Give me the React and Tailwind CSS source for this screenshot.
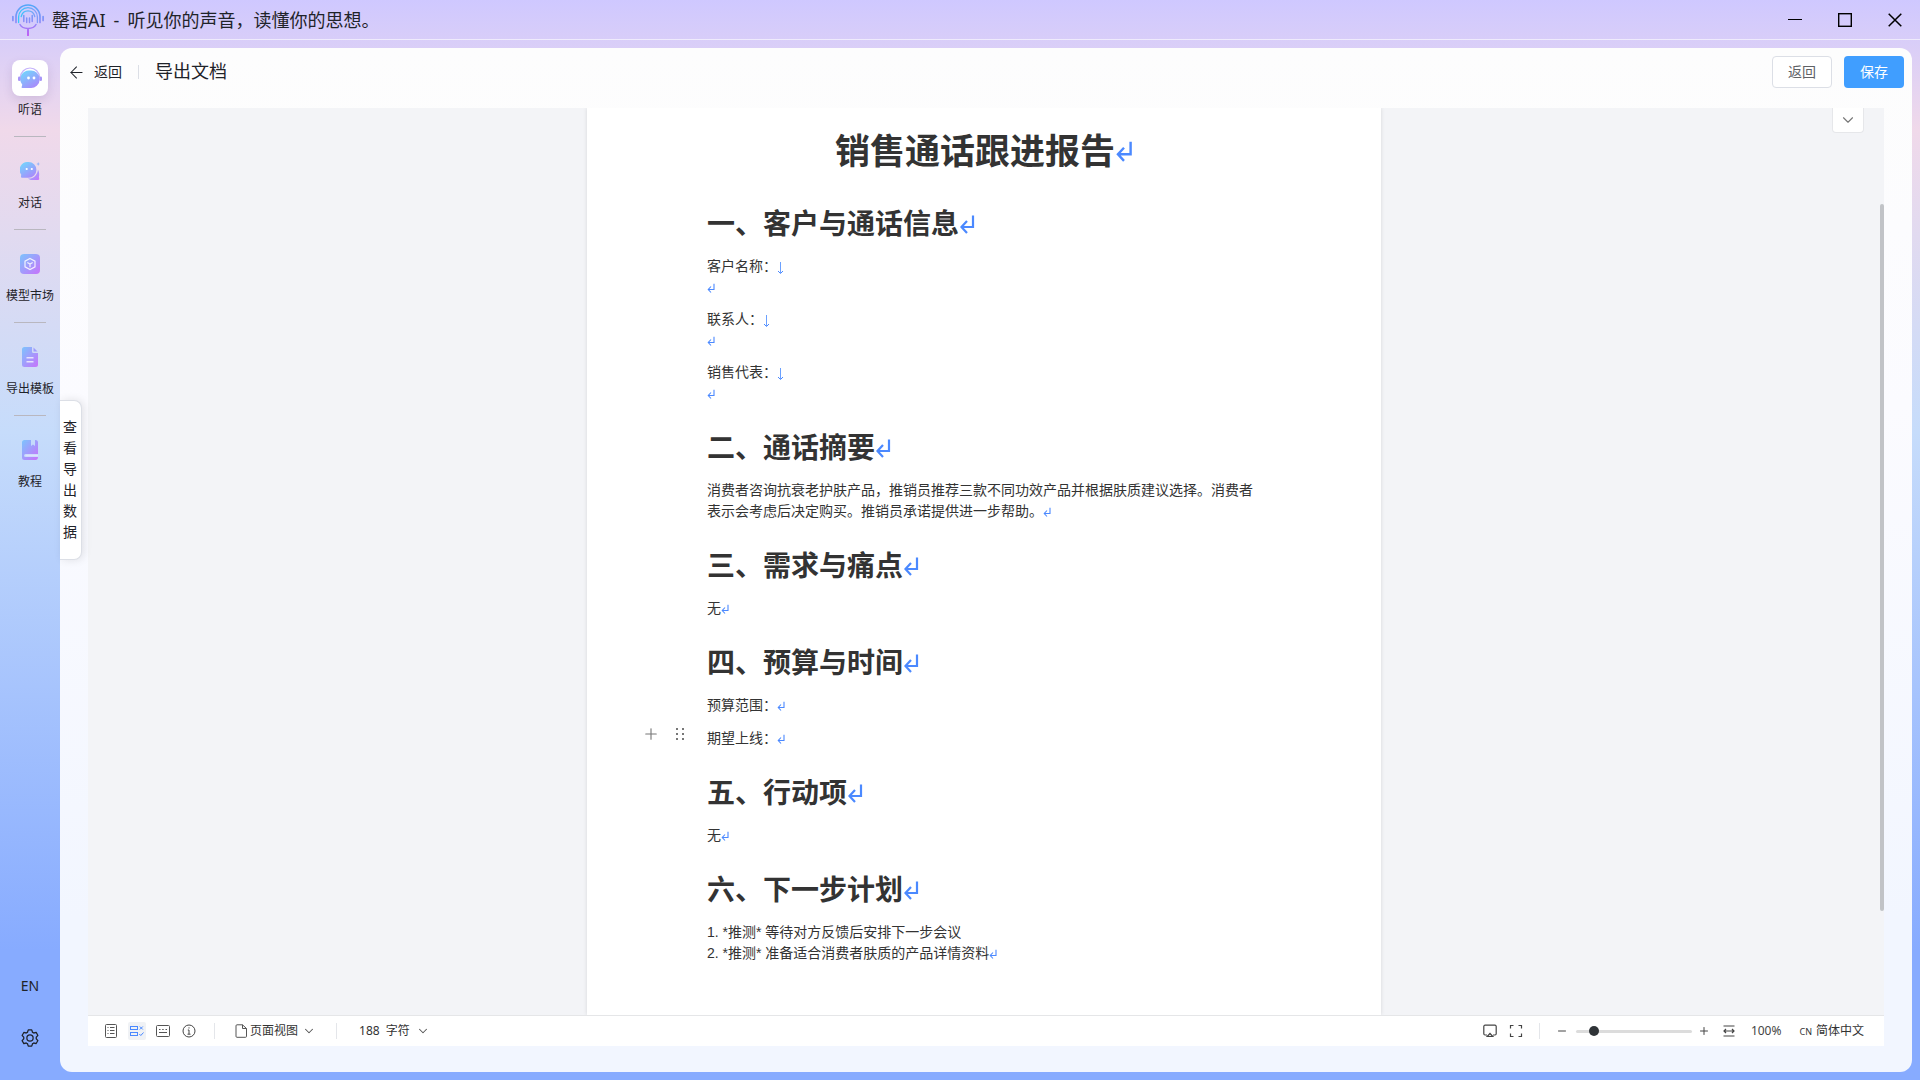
import { Minus, Plus, ChevronDown, ArrowLeft } from "lucide-react";

const NAV = [
  { id: "listen", label: "听语", icon: ListenIcon, active: true },
  { id: "chat", label: "对话", icon: ChatIcon },
  { id: "market", label: "模型市场", icon: MarketIcon },
  { id: "template", label: "导出模板", icon: TemplateIcon },
  { id: "guide", label: "教程", icon: GuideIcon },
];

// shared gradients, referenced by id from the icons
function Gradients() {
  return (
    <svg width="0" height="0" className="absolute" aria-hidden="true">
      <defs>
        <linearGradient id="g-diag" x1="0" y1="0" x2="1" y2="1">
          <stop offset="0" stopColor="#7cc4fd" />
          <stop offset="1" stopColor="#c873fb" />
        </linearGradient>
        <linearGradient id="g-bubble" x1="0.2" y1="0" x2="0.9" y2="1">
          <stop offset="0" stopColor="#72d6fd" />
          <stop offset="1" stopColor="#ae82fb" />
        </linearGradient>
        <linearGradient id="g-logo" x1="0" y1="0" x2="0" y2="32" gradientUnits="userSpaceOnUse">
          <stop offset="0" stopColor="#4fa8f8" />
          <stop offset="0.55" stopColor="#8a8ef8" />
          <stop offset="1" stopColor="#c35cf5" />
        </linearGradient>
        <linearGradient id="g-logo-inner" x1="8" y1="0" x2="24" y2="0" gradientUnits="userSpaceOnUse">
          <stop offset="0" stopColor="#35c8fa" />
          <stop offset="1" stopColor="#7f9cf8" />
        </linearGradient>
      </defs>
    </svg>
  );
}

function Logo() {
  return (
    <svg width="32" height="32" viewBox="0 0 32 32" fill="none" stroke="url(#g-logo)" strokeLinecap="round">
      <path d="M4 18.500V13a12 12 0 0 1 24 0v5.500" strokeWidth="1.700" />
      <path d="M6.600 18.500V13a9.400 9.400 0 0 1 18.800 0v5.500" strokeWidth="1.300" stroke="url(#g-logo-inner)" />
      <path d="M9.200 12.500a7 7.500 0 0 1 13.600 0" strokeWidth="1.300" stroke="url(#g-logo-inner)" />
      <path d="M.9 12.500v4M31.100 12.500v4" strokeWidth="1.700" />
      <path d="M8 20.500a8.500 6 0 0 0 16 0" strokeWidth="1.500" />
      <path d="M11.800 11.500v6M14.700 14v4.500M17.500 14v4.500M20.200 11.500v6" strokeWidth="1.500" />
      <path d="M16 25.500v5.700" strokeWidth="2" />
    </svg>
  );
}

function ListenIcon() {
  return (
    <svg width="26" height="26" viewBox="0 0 26 26" fill="none">
      <path d="M3.500 12.500a9.500 9.500 0 0 1 19 0" stroke="#c5b3fb" strokeWidth="1.200" />
      <path d="M13 5.500a8.800 8.800 0 1 1 0 17.500H5.400c-.8 0-1.100-.6-.7-1.200l.6-2A8.800 8.800 0 0 1 13 5.500z" fill="url(#g-bubble)" />
      <rect x="1" y="11.500" width="2.600" height="4.500" rx="1.300" fill="#a795f8" />
      <rect x="22.400" y="11.500" width="2.600" height="4.500" rx="1.300" fill="#a795f8" />
      <circle cx="11.500" cy="13" r="1.400" fill="#fff" />
      <circle cx="17" cy="13" r="1.400" fill="#fff" />
    </svg>
  );
}

function ChatIcon() {
  return (
    <svg width="20" height="20" viewBox="0 0 20 20" fill="none">
      <path d="M18 8.500c1.500 3 1.400 5.500.9 7.500l.3 1.800c.1.700-.2 1.200-1 1.200H12c-1.800 0-3-.6-4-1.500 5 .5 9.500-3 10-9z" fill="url(#g-diag)" />
      <path d="M8.500 1a7.900 7.900 0 1 1 0 15.800H2c-.8 0-1.100-.5-1-1.200l.2-2A7.900 7.900 0 0 1 8.500 1z" fill="url(#g-bubble)" />
      <path d="M18.200 1l.5 1.500 1.300.5-1.300.5-.5 1.500-.5-1.500-1.300-.5 1.300-.5z" fill="#8eb0fb" />
      <circle cx="6.700" cy="8" r="1.100" fill="#fff" />
      <circle cx="11.800" cy="8" r="1.100" fill="#fff" />
    </svg>
  );
}

function MarketIcon() {
  return (
    <svg width="20" height="20" viewBox="0 0 20 20" fill="none">
      <rect width="20" height="20" rx="4" fill="url(#g-diag)" />
      <path d="M10 4.500l5 2.700v5.600l-5 2.700-5-2.700V7.200z" stroke="#fff" strokeOpacity=".85" strokeWidth="1.200" />
      <path d="M7.300 8.500L10 10l2.700-1.500M10 10v3.300" stroke="#fff" strokeOpacity=".85" strokeWidth="1.200" />
    </svg>
  );
}

function TemplateIcon() {
  return (
    <svg width="16" height="20" viewBox="0 0 16 20" fill="none">
      <path d="M2.500 0H10v4.500A1.500 1.500 0 0 0 11.500 6H16v11.500a2.500 2.500 0 0 1-2.500 2.500h-11A2.500 2.500 0 0 1 0 17.500v-15A2.500 2.500 0 0 1 2.500 0z" fill="url(#g-diag)" />
      <path d="M11.500.5l4 4h-4z" fill="#9f9bfc" />
      <path d="M4.500 10.700h7M4.500 14.700h7" stroke="#e6e2fd" strokeWidth="1.400" />
    </svg>
  );
}

function GuideIcon() {
  return (
    <svg width="16" height="20" viewBox="0 0 16 20" fill="none">
      <path d="M2.500 0H9v6l2-1.500L13 6V0h.5A2.500 2.500 0 0 1 16 2.500V14H3.500a1.500 1.500 0 0 0 0 3H16c0 1.800-1 3-2.500 3h-11A2.500 2.500 0 0 1 0 17.500v-15A2.500 2.500 0 0 1 2.500 0z" fill="url(#g-diag)" />
      <path d="M3.500 15.500H16" stroke="#dfe0fd" strokeWidth="1.600" />
    </svg>
  );
}

function GearIcon() {
  return (
    <svg width="20" height="20" viewBox="0 0 1024 1024" fill="currentColor">
      <path d="M600.700 64a32 32 0 0 1 30.500 22.200l35.200 109.400c14.700 7.200 28.700 15.400 42.400 24.400l112.400-24.200a32 32 0 0 1 34.400 15.300L944.300 364.800a32 32 0 0 1-4 37.500l-77.100 85.100a357.100 357.100 0 0 1 0 49l77.100 85.200a32 32 0 0 1 4 37.500l-88.700 153.600a32 32 0 0 1-34.400 15.300L708.800 803.900c-13.600 9-27.700 17.200-42.300 24.400l-35.300 109.400A32 32 0 0 1 600.700 960H423.300a32 32 0 0 1-30.500-22.200L357.700 828.500a351.600 351.600 0 0 1-42.600-24.600l-112.300 24.200a32 32 0 0 1-34.400-15.300L79.700 659.200a32 32 0 0 1 4-37.500l77.100-85.200a357.100 357.100 0 0 1 0-48.900L83.700 402.400a32 32 0 0 1-4-37.500l88.700-153.600a32 32 0 0 1 34.400-15.300l112.300 24.300c13.800-9.100 27.900-17.400 42.700-24.600l35.100-109.500A32 32 0 0 1 423.200 64zm-23.400 64H446.700l-36.400 113.100-24.500 12a294.100 294.100 0 0 0-34.800 20.100l-22.700 15.300-116.300-25.100-65.300 113 79.700 88.200-2 27.100a293.100 293.100 0 0 0 0 40.200l2 27.100-79.800 88.200 65.300 113 116.300-25 22.700 15.200a294.100 294.100 0 0 0 34.800 20.100l24.500 12L446.700 896h130.700l36.500-113.200 24.400-11.900a288.300 288.300 0 0 0 34.700-20.100l22.600-15.300 116.400 25.100 65.300-113-79.800-88.200 2-27.100a293.100 293.100 0 0 0 0-40.300l-2-27.100 79.800-88.100-65.300-113-116.400 24.900-22.600-15.100a287.600 287.600 0 0 0-34.700-20.100l-24.400-12L577.300 128zM512 320a192 192 0 1 1 0 384 192 192 0 0 1 0-384m0 64a128 128 0 1 0 0 256 128 128 0 0 0 0-256" />
    </svg>
  );
}

const MARK_SIZE = {
  sm: "inline w-2 h-[10px] align-[-1px]",
  md: "inline w-4 h-5 align-[0px]",
  lg: "inline w-[18px] h-[22px] align-[2px]",
};

// paragraph mark shown at the end of each block
function Mark({ size = "sm" }) {
  return (
    <svg viewBox="0 0 16 20" className={MARK_SIZE[size]} fill="none" stroke="#4b89ff" strokeWidth="2.200" aria-hidden="true">
      <path d="M14 1.500v11.500H3M8 7L2.500 13l5.500 6" />
    </svg>
  );
}

function BreakMark() {
  return (
    <svg viewBox="0 0 8 14" className="inline w-2 h-[14px] align-[-4px]" fill="none" stroke="#6ba1ff" aria-hidden="true">
      <path d="M3.500 1v11" />
      <path d="M1 10l2.500 2.500L6 10" stroke="#4b89ff" />
    </svg>
  );
}

function Heading({ children }) {
  return (
    <h2 className="mt-6 mb-[10px] text-[28px] leading-[42px] font-bold">
      {children}
      <Mark size="md" />
    </h2>
  );
}

function Divider() {
  return <span className="w-px h-4 bg-[#e4e6ea]" />;
}

function Document() {
  return (
    <article className="relative w-[794px] shrink-0 bg-white px-[120px] pt-[18px] text-sm leading-[21px] text-[#333] shadow-[0_0_4px_rgba(0,0,0,0.12)]">
      <h1 className="mb-[26px] text-center text-[35px] leading-[52px] font-bold">
        销售通话跟进报告
        <Mark size="lg" />
      </h1>
      <Heading>一、客户与通话信息</Heading>
      <div className="flex flex-col gap-[11px]">
        {["客户名称：", "联系人：", "销售代表："].map((field) => (
          <p key={field}>
            {field}
            <BreakMark />
            <br />
            <Mark />
          </p>
        ))}
      </div>
      <Heading>二、通话摘要</Heading>
      <p>
        消费者咨询抗衰老护肤产品，推销员推荐三款不同功效产品并根据肤质建议选择。消费者表示会考虑后决定购买。推销员承诺提供进一步帮助。
        <Mark />
      </p>
      <Heading>三、需求与痛点</Heading>
      <p>无<Mark /></p>
      <Heading>四、预算与时间</Heading>
      <p>预算范围：<Mark /></p>
      <div className="relative mt-3">
        {/* block handle, hangs in the page margin */}
        <div className="absolute -left-[65px] -top-1 flex items-center gap-2.5 text-[#777]">
          <button type="button" aria-label="插入" className="flex size-[18px] items-center justify-center">
            <Plus size={18} strokeWidth={1.500} />
          </button>
          <button type="button" aria-label="拖动" className="flex size-5 items-center justify-center">
            <svg width="10" height="14" viewBox="0 0 10 14" fill="currentColor">
              {[2, 7, 12].map((y) => (
                <g key={y}>
                  <rect x="1" y={y - 1} width="2" height="2" />
                  <rect x="7" y={y - 1} width="2" height="2" />
                </g>
              ))}
            </svg>
          </button>
        </div>
        <p>期望上线：<Mark /></p>
      </div>
      <Heading>五、行动项</Heading>
      <p>无<Mark /></p>
      <Heading>六、下一步计划</Heading>
      <p>
        1. *推测* 等待对方反馈后安排下一步会议
        <br />
        2. *推测* 准备适合消费者肤质的产品详情资料
        <Mark />
      </p>
    </article>
  );
}

function StatusBar() {
  return (
    <footer className="flex h-[31px] shrink-0 items-center justify-between border-t border-[#e5e6e8] bg-white pl-[14px] pr-5 font-['Noto_Sans','Noto_Sans_CJK_SC',sans-serif] text-xs text-[#333]">
      <div className="flex items-center gap-2">
        <button type="button" aria-label="目录" className="flex size-[18px] items-center justify-center text-[#555]">
          <svg width="12" height="14" viewBox="0 0 12 14" fill="none" stroke="currentColor">
            <rect x=".5" y=".5" width="11" height="13" rx="1" />
            <path d="M2.500 3.500h1M5 3.500h4.500M2.500 6.500h1M5 6.500h4.500M2.500 9.500h1M5 9.500h4.500" />
          </svg>
        </button>
        <button type="button" aria-label="格式标记" className="flex size-[18px] items-center justify-center rounded-xs bg-[#f0f2f5] text-[#4b89ff]">
          <svg width="14" height="12" viewBox="0 0 14 12" fill="none" stroke="currentColor">
            <rect x=".5" y="1.500" width="7" height="3" />
            <rect x=".5" y="7.500" width="7" height="3" />
            <path d="M9.800 1.500l3 3M12.800 1.500l-3 3M9.300 9l1.500 1.500 2.700-3" />
          </svg>
        </button>
        <button type="button" aria-label="键盘" className="flex size-[18px] items-center justify-center text-[#555]">
          <svg width="14" height="12" viewBox="0 0 14 12" fill="none" stroke="currentColor">
            <rect x=".5" y=".5" width="13" height="11" rx="1" />
            <path d="M3 4.500h1.500M6.200 4.500h1.500M9.500 4.500H11M3 7.500h8" />
          </svg>
        </button>
        <button type="button" aria-label="信息" className="flex size-[18px] items-center justify-center text-[#444]">
          <svg width="14" height="14" viewBox="0 0 14 14" fill="none" stroke="currentColor">
            <circle cx="7" cy="7" r="6" />
            <path d="M5.800 6H7v4M5.500 10.200h3M7 3.300v1.200" />
          </svg>
        </button>
        <div className="flex items-center gap-5 pl-2">
          <Divider />
          <button type="button" className="flex items-center">
            <svg width="12" height="14" viewBox="0 0 12 14" fill="none" stroke="#555" className="mr-[3px]">
              <path d="M7.500.8H2a1 1 0 0 0-1 1v10.500a1 1 0 0 0 1 1h8.500a1 1 0 0 0 1-1V4.500zM7.500.8v3.700h4" />
            </svg>
            页面视图
            <ChevronDown size={14} strokeWidth={1.800} className="ml-1 text-[#555]" />
          </button>
          <Divider />
          <button type="button" className="ml-[2px] flex items-center">
            188&nbsp; 字符
            <ChevronDown size={14} strokeWidth={1.800} className="ml-1.5 text-[#555]" />
          </button>
        </div>
      </div>
      <div className="flex items-center text-[#444]">
        <button type="button" aria-label="演示" className="mr-3">
          <svg width="14" height="14" viewBox="0 0 14 14" fill="none" stroke="currentColor" strokeWidth="1.200">
            <path d="M4 11H2a1.200 1.200 0 0 1-1.200-1.200V2.400A1.200 1.200 0 0 1 2 1.200h10a1.200 1.200 0 0 1 1.200 1.200v7.400A1.200 1.200 0 0 1 12 11h-2M7 9.500l2.800 3H4.200z" />
          </svg>
        </button>
        <button type="button" aria-label="全屏" className="mr-4">
          <svg width="14" height="14" viewBox="0 0 14 14" fill="none" stroke="currentColor" strokeWidth="1.200">
            <path d="M1.500 4.500v-3h3M9.500 1.500h3v3M12.500 9.500v3h-3M4.500 12.500h-3v-3" />
          </svg>
        </button>
        <Divider />
        <button type="button" aria-label="缩小" className="ml-4 mr-2">
          <Minus size={12} strokeWidth={2} />
        </button>
        <input
          type="range"
          aria-label="缩放"
          min="0"
          max="100"
          defaultValue="12"
          className="h-[3px] w-[116px] appearance-none rounded-full bg-[#dcdcdc] [&::-webkit-slider-thumb]:size-[10px] [&::-webkit-slider-thumb]:appearance-none [&::-webkit-slider-thumb]:rounded-full [&::-webkit-slider-thumb]:bg-[#2f3337]"
        />
        <button type="button" aria-label="放大" className="ml-1.5">
          <Plus size={12} strokeWidth={2} />
        </button>
        <button type="button" aria-label="适应宽度" className="ml-[13px]">
          <svg width="12" height="12" viewBox="0 0 12 12" fill="none" stroke="currentColor" strokeWidth="1.200">
            <path d="M.5 1h11M.5 11h11M1 6h10M3 4L1 6l2 2M9 4l2 2-2 2" />
          </svg>
        </button>
        <span className="ml-4">100%</span>
        <button type="button" className="ml-[18px] flex items-baseline gap-1 text-[#333]">
          <span className="text-[9px]">CN</span>
          简体中文
        </button>
      </div>
    </footer>
  );
}

export default function App() {
  return (
    <div className="flex h-screen flex-col overflow-hidden bg-[linear-gradient(180deg,#cfc8ff_0%,#d9cef8_4%,#f0d9ea_12%,#c6dcfb_40%,#87abff_88%,#87abff_100%)] font-['Liberation_Sans','Noto_Sans_CJK_SC',sans-serif] text-[#1f2329]">
      <Gradients />
      <header className="flex h-10 shrink-0 items-center justify-between border-b border-white/60 pl-3">
        <div className="flex items-center gap-2 font-['Noto_Sans','Noto_Sans_CJK_SC',sans-serif] text-lg leading-7">
          <Logo />
          <span>罄语AI</span>
          <span>-</span>
          <span>听见你的声音，读懂你的思想。</span>
        </div>
        <div className="flex items-center gap-9 pr-[18px] text-black">
          <button type="button" aria-label="最小化">
            <svg width="14" height="14" viewBox="0 0 14 14" stroke="currentColor">
              <path d="M0 6.500h14" />
            </svg>
          </button>
          <button type="button" aria-label="最大化">
            <svg width="14" height="14" viewBox="0 0 14 14" fill="none" stroke="currentColor" strokeWidth="1.400">
              <rect x=".7" y=".7" width="12.600" height="12.600" />
            </svg>
          </button>
          <button type="button" aria-label="关闭">
            <svg width="14" height="14" viewBox="0 0 14 14" stroke="currentColor" strokeWidth="1.500">
              <path d="M.7.700l12.600 12.600M13.300.700L.7 13.300" />
            </svg>
          </button>
        </div>
      </header>

      <div className="flex min-h-0 flex-1 pt-2 pr-2 pb-2">
        <nav className="flex w-[60px] shrink-0 flex-col items-center pt-3 text-xs leading-[18px]">
          {NAV.map(({ id, label, icon: Icon, active }, i) => (
            <div key={id} className="flex flex-col items-center">
              {i > 0 && <span className="mt-[17px] mb-4 h-px w-8 bg-[#b9b7bf]" />}
              <a href={`#${id}`} className="flex flex-col items-center gap-[5px] whitespace-nowrap">
                <span
                  className={
                    active
                      ? "flex size-9 items-center justify-center rounded-lg bg-white shadow-[0_4px_10px_rgba(80,60,120,0.15)]"
                      : "flex size-9 items-center justify-center"
                  }
                >
                  <Icon />
                </span>
                {label}
              </a>
            </div>
          ))}
          <button type="button" className="mt-auto font-['Noto_Sans',sans-serif] text-sm leading-5">EN</button>
          <button type="button" aria-label="设置" className="mt-8 mb-6">
            <GearIcon />
          </button>
        </nav>

        <main className="relative flex min-w-0 flex-1 flex-col rounded-xl bg-[linear-gradient(180deg,#fdfdfd_0%,#fbfbff_35%,#f2f6ff_85%)] pb-[26px]">
          <div className="flex h-[60px] shrink-0 items-start justify-between pt-2 pl-[7px] pr-2">
            <div className="flex h-8 items-center">
              <button type="button" className="flex items-center gap-2 text-sm">
                <ArrowLeft size={19} strokeWidth={1.300} />
                返回
              </button>
              <span className="mx-4 h-[14px] w-px bg-[#dcdfe6]" />
              <h1 className="text-lg leading-7">导出文档</h1>
            </div>
            <div className="flex gap-3 text-sm">
              <button type="button" className="h-8 w-[60px] rounded border border-[#dcdfe6] bg-white text-[#606266]">返回</button>
              <button type="button" className="h-8 w-[60px] rounded bg-[#409eff] text-white">保存</button>
            </div>
          </div>

          <section className="mx-7 flex min-h-0 flex-1 flex-col">
            <div className="relative flex min-h-0 flex-1 justify-center overflow-hidden bg-[#f3f4f7] pr-1">
              <Document />
              <button
                type="button"
                aria-label="展开工具栏"
                className="absolute top-0 right-5 flex h-[25px] w-8 items-center justify-center rounded-b border border-t-0 border-[#e6e7ea] bg-white text-[#777]"
              >
                <ChevronDown size={18} strokeWidth={1.500} />
              </button>
              <span className="absolute top-24 right-0 bottom-[104px] w-1 rounded-full bg-[#c1c3c7]" />
            </div>
            <StatusBar />
          </section>

          <button
            type="button"
            className="absolute top-[352px] left-0 flex w-[22px] flex-col items-center rounded-r-lg border border-l-0 border-[#dcdfe6] bg-white py-4 pr-px text-sm leading-[21px] shadow-[2px_0_8px_rgba(0,0,0,0.1)]"
          >
            {[..."查看导出数据"].map((ch) => (
              <span key={ch}>{ch}</span>
            ))}
          </button>
        </main>
      </div>
    </div>
  );
}
